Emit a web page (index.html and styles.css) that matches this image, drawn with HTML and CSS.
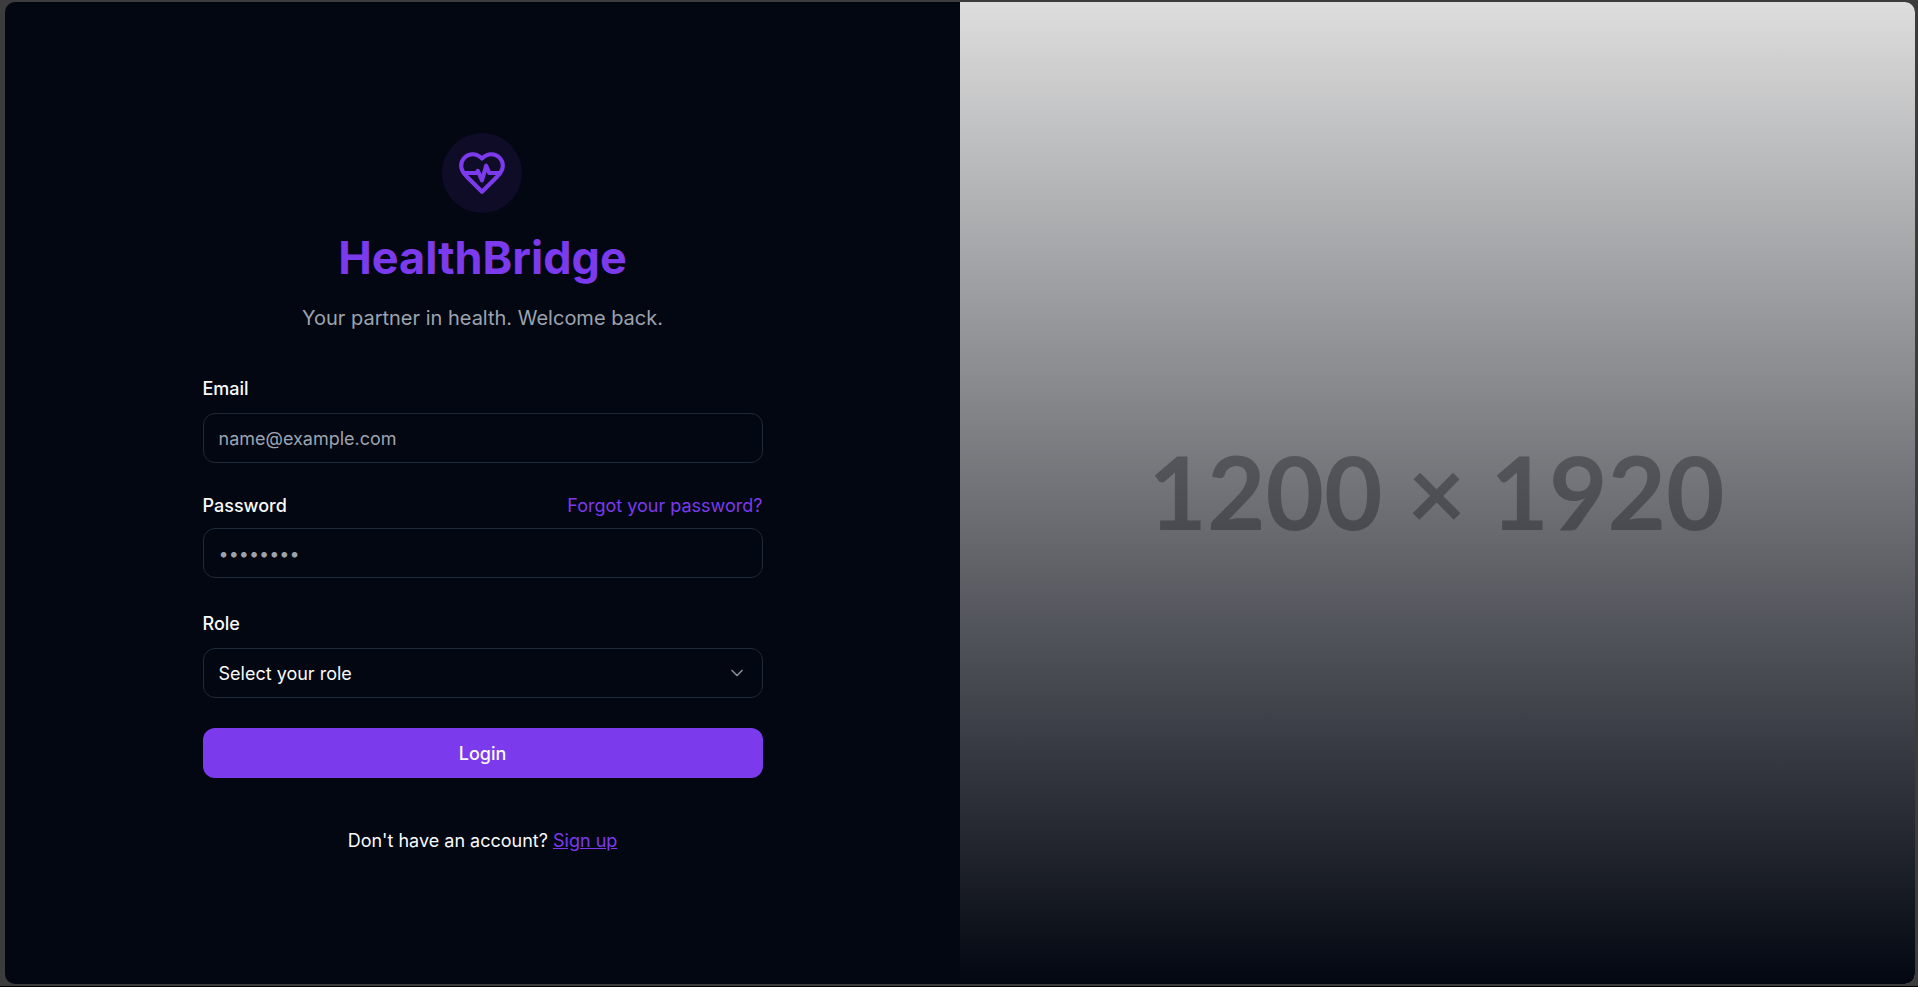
FILE: index.html
```html
<!DOCTYPE html>
<html lang="en">
<head>
<meta charset="utf-8">
<meta name="viewport" content="width=device-width, initial-scale=1">
<title>HealthBridge</title>
<link rel="stylesheet" href="styles.css">
</head>
<body>
<div class="window">
  <main class="panel">
    <section class="login">
      <header class="brand">
        <span class="brand-mark">
          <svg class="brand-icon" viewBox="0 0 24 24" aria-hidden="true">
            <path d="M19 14c1.49-1.46 3-3.21 3-5.5A5.5 5.5 0 0 0 16.5 3c-1.76 0-3 .5-4.5 2-1.5-1.5-2.74-2-4.5-2A5.5 5.5 0 0 0 2 8.5c0 2.3 1.5 4.05 3 5.5l7 7Z"/>
            <path d="M3.22 12H9.5l.5-1 2 4.5 2-7 1.5 3.5h5.27"/>
          </svg>
        </span>
        <h1 class="title">HealthBridge</h1>
        <p class="tagline">Your partner in health. Welcome back.</p>
      </header>
      <form class="form">
        <div class="field">
          <label class="label" for="email">Email</label>
          <input class="control" id="email" type="email" placeholder="name@example.com">
        </div>
        <div class="field">
          <div class="label-row">
            <label class="label-inline" for="password">Password</label>
            <a class="forgot" href="#">Forgot your password?</a>
          </div>
          <input class="control" id="password" type="password" placeholder="••••••••">
        </div>
        <div class="field">
          <label class="label" for="role">Role</label>
          <div class="select-wrap">
            <select class="control select" id="role">
              <option>Select your role</option>
              <option>Patient</option>
              <option>Doctor</option>
            </select>
            <svg class="chevron" viewBox="0 0 24 24" aria-hidden="true"><path d="m6 9 6 6 6-6"/></svg>
          </div>
        </div>
        <button class="submit" type="submit">Login</button>
      </form>
      <p class="signup">Don't have an account? <a class="signup-link" href="#">Sign up</a></p>
    </section>
    <aside class="cover">
      <span class="cover-text">1200 × 1920</span>
    </aside>
  </main>
</div>
</body>
</html>
```
FILE: styles.css
```css
* {
  box-sizing: border-box;
}

body {
  margin: 0;
  background: #3c3c3c;
  color: #f9fafb;
  font-family: Inter, "Liberation Sans", sans-serif;
  font-size: 18px;
  line-height: 25px;
}

.window {
  display: flex;
  min-height: 100vh;
  padding: 2px 3px 2px 5px;
  border-bottom: 1px solid #000;
}

.panel {
  flex: 1;
  display: grid;
  grid-template-columns: 1fr 1fr;
  overflow: hidden;
  border-radius: 10px;
  background: #030711;
}

.login {
  display: flex;
  flex-direction: column;
  align-items: center;
  justify-content: center;
}

.brand {
  display: flex;
  flex-direction: column;
  align-items: center;
  gap: 20px;
  margin-bottom: 40px;
}

.brand-mark {
  display: flex;
  padding: 15px;
  border-radius: 50%;
  background: #7c3aed1a;
}

.brand-icon {
  width: 50px;
  height: 50px;
  fill: none;
  stroke: #7c3aed;
  stroke-width: 2;
  stroke-linecap: round;
  stroke-linejoin: round;
}

.title {
  margin: 0;
  color: #7c3aed;
  font-size: 45px;
  font-weight: 700;
  line-height: 50px;
}

.tagline {
  margin: 0;
  color: #9ca3af;
  font-size: 20px;
  line-height: 30px;
}

.form {
  display: flex;
  flex-direction: column;
  gap: 30px;
  width: 100%;
  max-width: 560px;
}

.field {
  display: flex;
  flex-direction: column;
  gap: 10px;
}

.label,
.label-inline {
  font-weight: 500;
}

.label {
  padding-top: 2px;
  line-height: 28px;
}

.label-row {
  display: flex;
  justify-content: space-between;
}

.forgot {
  color: #7c3aed;
  text-decoration: none;
}

.control {
  width: 100%;
  height: 50px;
  padding: 0 15px;
  border: 1px solid #1f2937;
  border-radius: 12px;
  background: #030711;
  color: inherit;
  font: inherit;
}

.control::placeholder {
  color: #9ca3af;
  opacity: 1;
}

.select-wrap {
  position: relative;
}

.select {
  display: block;
  appearance: none;
}

.chevron {
  position: absolute;
  top: 15px;
  right: 16px;
  width: 20px;
  height: 20px;
  fill: none;
  stroke: #8b8d92;
  stroke-width: 2;
  stroke-linecap: round;
  stroke-linejoin: round;
  pointer-events: none;
}

.submit {
  height: 50px;
  border: 0;
  border-radius: 12px;
  background: #7c3aed;
  color: #f9fafb;
  font: inherit;
  font-weight: 500;
}

.signup {
  margin: 50px 0 0;
}

.signup-link {
  color: #7c3aed;
}

.cover {
  position: relative;
  display: flex;
  align-items: center;
  justify-content: center;
  padding: 0 2px 4px 0;
  background: #ddd;
}

.cover::after {
  content: "";
  position: absolute;
  inset: 0;
  background: linear-gradient(to top, #030711, #03071100);
}

.cover-text {
  color: #999;
  font-family: Lato, sans-serif;
  font-size: 101px;
  font-weight: 700;
  line-height: 120px;
}
```
